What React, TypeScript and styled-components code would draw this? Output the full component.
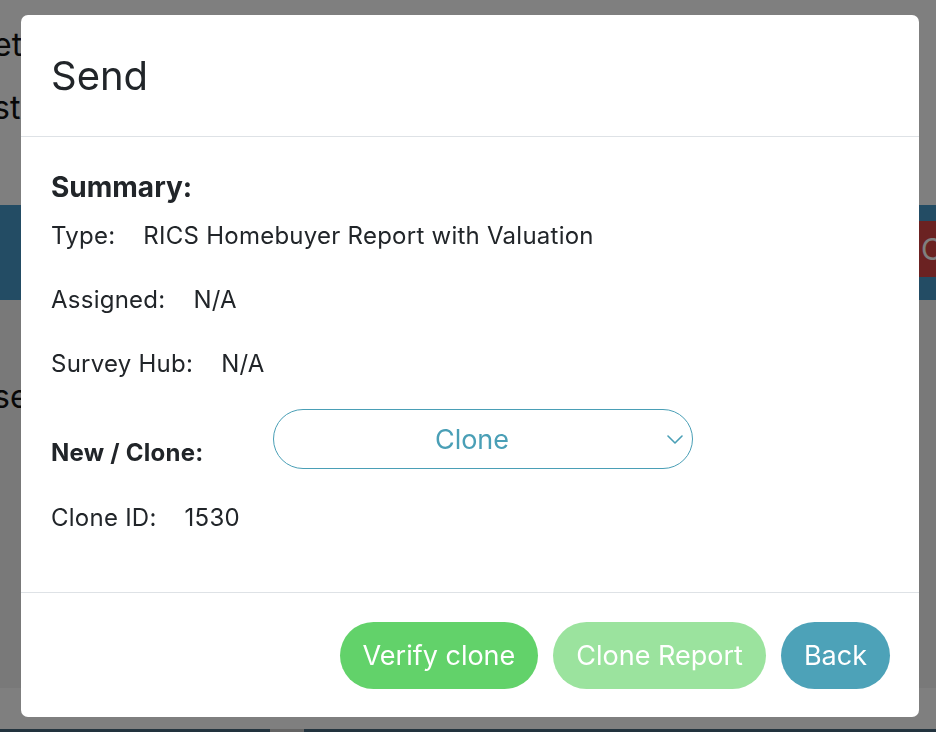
import React from 'react';
import styled, { createGlobalStyle } from 'styled-components';

const GlobalStyle = createGlobalStyle`
	html, body {
		margin: 0;
		padding: 0;
		height: 100%;
		overflow: hidden;
	}
	body {
		font-family: Inter, "Noto Sans", "Liberation Sans", sans-serif;
		color: #212529;
		background: #ffffff;
	}
`;

const Page = styled.div`
	width: 936px;
	height: 732px;
	display: flex;
	flex-direction: column;
	background: #ffffff;
	overflow: hidden;
`;

const PageTop = styled.div`
	height: 205px;
	padding-top: 24px;
	box-sizing: border-box;
	display: flex;
	flex-direction: column;
	gap: 21px;
`;

const PageText = styled.div`
	font-size: 32px;
	line-height: 42px;
	color: #111;
	white-space: nowrap;
	margin-left: -7px;
`;

const Band = styled.div`
	height: 95px;
	background: #4799c9;
	display: flex;
	justify-content: flex-end;
	align-items: center;
`;

const BandButton = styled.div`
	width: 40px;
	height: 56px;
	margin-right: -22px;
	margin-top: -8px;
	padding-left: 3px;
	box-sizing: border-box;
	background: #d74545;
	color: #ffffff;
	font-size: 30px;
	line-height: 56px;
`;

const PageMain = styled.div`
	flex: 1;
	background: #f2f2f2;
	padding-top: 76px;
	box-sizing: border-box;
`;

const PageBar = styled.div`
	height: 41px;
	background: #ffffff;
`;

const PageStrip = styled.div`
	height: 3px;
	display: flex;
	background: #45677d;

	span {
		margin-left: 270px;
		width: 34px;
		background: #c8c8c8;
	}
`;

const Overlay = styled.div`
	position: fixed;
	inset: 0;
	background: rgba(0, 0, 0, 0.5);
	padding: 15px 17px 15px 21px;
	box-sizing: border-box;
`;

const Modal = styled.div`
	width: 898px;
	height: 702px;
	background: #ffffff;
	border-radius: 7px;
	display: flex;
	flex-direction: column;
	overflow: hidden;
`;

const Header = styled.div`
	padding: 30px 30px;
	border-bottom: 1px solid #dee2e6;
`;

const Title = styled.h2`
	margin: 0;
	font-size: 40px;
	line-height: 61px;
	font-weight: 400;
	color: #212529;
`;

const Body = styled.div`
	flex: 1;
	padding: 34px 30px 0;
	border-bottom: 1px solid #dee2e6;
`;

const Heading = styled.div`
	font-size: 28px;
	line-height: 32px;
	font-weight: 700;
`;

const Line = styled.div<{ $gap: number }>`
	margin-top: ${(p) => p.$gap}px;
	font-size: 24px;
	line-height: 32px;
	letter-spacing: 0.25px;
	white-space: nowrap;
`;

const Value = styled.span`
	margin-left: 28px;
`;

const SelectRow = styled.div`
	margin-top: 29px;
	display: flex;
	align-items: flex-end;
`;

const SelectLabel = styled.div`
	width: 222px;
	font-size: 24px;
	line-height: 32px;
	font-weight: 700;
	letter-spacing: 0.25px;
`;

const Select = styled.div`
	width: 420px;
	height: 60px;
	box-sizing: border-box;
	padding-right: 22px;
	border: 1px solid #4a9fb6;
	border-radius: 30px;
	display: flex;
	align-items: center;
	justify-content: center;
	position: relative;
	color: #4a9fb6;
	font-size: 27px;

	svg {
		position: absolute;
		right: 9px;
		top: 25px;
	}
`;

const Footer = styled.div`
	height: 124px;
	padding: 0 29px;
	display: flex;
	justify-content: flex-end;
	align-items: center;
	gap: 15px;
`;

const Button = styled.button<{ $bg: string }>`
	height: 67px;
	padding: 0 23px;
	border: none;
	border-radius: 34px;
	background: ${(p) => p.$bg};
	color: #ffffff;
	font-family: inherit;
	font-size: 27px;
	cursor: pointer;
`;

export default function App() {
	return (
		<>
			<GlobalStyle />
			<Page>
				<PageTop>
					<PageText>ete</PageText>
					<PageText>sta</PageText>
				</PageTop>
				<Band>
					<BandButton>C</BandButton>
				</Band>
				<PageMain>
					<PageText>sea</PageText>
				</PageMain>
				<PageBar />
				<PageStrip>
					<span />
				</PageStrip>
			</Page>
			<Overlay>
				<Modal>
					<Header>
						<Title>Send</Title>
					</Header>
					<Body>
						<Heading>Summary:</Heading>
						<Line $gap={17}>
							Type:<Value>RICS Homebuyer Report with Valuation</Value>
						</Line>
						<Line $gap={32}>
							Assigned:<Value>N/A</Value>
						</Line>
						<Line $gap={32}>
							Survey Hub:<Value>N/A</Value>
						</Line>
						<SelectRow>
							<SelectLabel>New / Clone:</SelectLabel>
							<Select>
								Clone
								<svg width="16" height="9" viewBox="0 0 16 9" fill="none">
									<polyline
										points="1,1 8,8 15,1"
										stroke="#4a9fb6"
										strokeWidth="1.6"
										strokeLinecap="round"
										strokeLinejoin="round"
									/>
								</svg>
							</Select>
						</SelectRow>
						<Line $gap={33}>
							Clone ID:<Value>1530</Value>
						</Line>
					</Body>
					<Footer>
						<Button $bg="#62d26a">Verify clone</Button>
						<Button $bg="#9be39e">Clone Report</Button>
						<Button $bg="#4da2b8">Back</Button>
					</Footer>
				</Modal>
			</Overlay>
		</>
	);
}
